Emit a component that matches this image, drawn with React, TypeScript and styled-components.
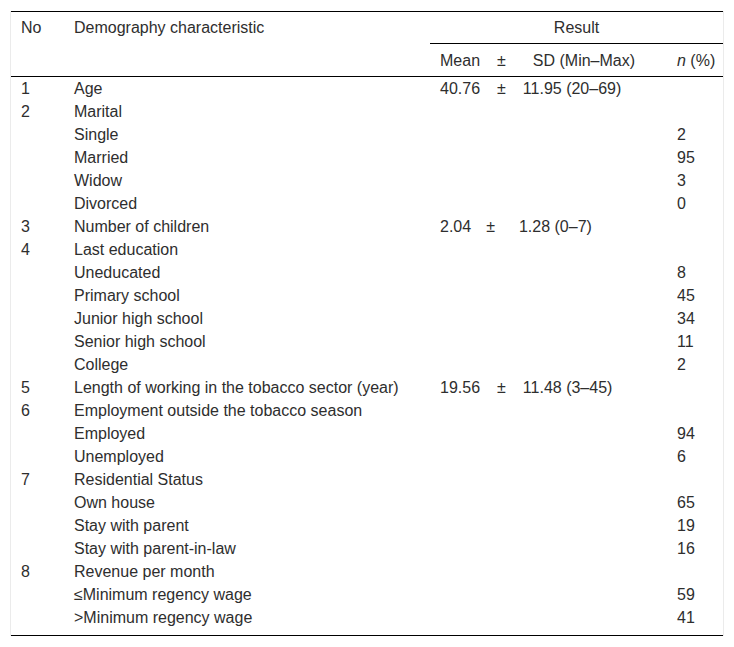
import React from "react";
import styled, { createGlobalStyle } from "styled-components";

const Global = createGlobalStyle`
  html, body { margin: 0; padding: 0; background: #fff; }
  body { font-family: "Liberation Sans", Arial, sans-serif; color: #2e2e2e; }
`;

const Wrapper = styled.div`
  margin: 11px 0 0 10px;
  width: 714px;
  border-left: 1px solid #ebebeb;
  border-right: 1px solid #ebebeb;
  box-sizing: border-box;
`;

const Table = styled.table`
  width: 712px;
  border-collapse: collapse;
  table-layout: fixed;
  font-family: "Liberation Sans", Arial, sans-serif;
  font-size: 16px;
  line-height: 19px;
  color: #2e2e2e;
  border-top: 1px solid #000;
  border-bottom: 1px solid #000;
`;

const HeadCell = styled.th<{ $center?: boolean; $rule?: boolean; $low?: boolean }>`
  font-weight: normal;
  text-align: ${(p) => (p.$center ? "center" : "left")};
  vertical-align: top;
  padding: ${(p) => (p.$low ? "7px 10px 6px" : "6px 10px 6px")};
  white-space: nowrap;
  border-bottom: ${(p) => (p.$rule ? "1px solid #000" : "none")};
`;

const LastHeadRow = styled.tr`
  border-bottom: 1px solid #000;
`;

const Cell = styled.td<{ $last?: boolean }>`
  padding: 2px 10px ${(p) => (p.$last ? "8px" : "2px")} 10px;
  vertical-align: top;
  white-space: nowrap;
`;

const Stat = styled.div<{ $g1: number; $g2: number }>`
  display: flex;
  align-items: baseline;
  & > span:nth-child(2) {
    margin: 0 ${(p) => p.$g2}px 0 ${(p) => p.$g1}px;
  }
`;

const Italic = styled.i`
  font-style: italic;
`;

type Row = {
  no?: string;
  label: string;
  stat?: [string, string, number, number];
  n?: string;
};

const rows: Row[] = [
  { no: "1", label: "Age", stat: ["40.76", "11.95 (20–69)", 17, 17] },
  { no: "2", label: "Marital" },
  { label: "Single", n: "2" },
  { label: "Married", n: "95" },
  { label: "Widow", n: "3" },
  { label: "Divorced", n: "0" },
  { no: "3", label: "Number of children", stat: ["2.04", "1.28 (0–7)", 15, 24] },
  { no: "4", label: "Last education" },
  { label: "Uneducated", n: "8" },
  { label: "Primary school", n: "45" },
  { label: "Junior high school", n: "34" },
  { label: "Senior high school", n: "11" },
  { label: "College", n: "2" },
  { no: "5", label: "Length of working in the tobacco sector (year)", stat: ["19.56", "11.48 (3–45)", 17, 17] },
  { no: "6", label: "Employment outside the tobacco season" },
  { label: "Employed", n: "94" },
  { label: "Unemployed", n: "6" },
  { no: "7", label: "Residential Status" },
  { label: "Own house", n: "65" },
  { label: "Stay with parent", n: "19" },
  { label: "Stay with parent-in-law", n: "16" },
  { no: "8", label: "Revenue per month" },
  { label: "≤Minimum regency wage", n: "59" },
  { label: ">Minimum regency wage", n: "41" },
];

export default function App() {
  return (
    <>
      <Global />
      <Wrapper>
        <Table>
          <colgroup>
            <col style={{ width: 53 }} />
            <col style={{ width: 366 }} />
            <col style={{ width: 237 }} />
            <col style={{ width: 56 }} />
          </colgroup>
          <thead>
            <tr>
              <HeadCell rowSpan={2}>No</HeadCell>
              <HeadCell rowSpan={2}>Demography characteristic</HeadCell>
              <HeadCell colSpan={2} $center $rule>
                Result
              </HeadCell>
            </tr>
            <LastHeadRow>
              <HeadCell $low>
                <Stat $g1={17} $g2={27}>
                  <span>Mean</span>
                  <span>±</span>
                  <span>SD (Min–Max)</span>
                </Stat>
              </HeadCell>
              <HeadCell $low>
                <Italic>n</Italic> (%)
              </HeadCell>
            </LastHeadRow>
          </thead>
          <tbody>
            {rows.map((r, i) => {
              const last = i === rows.length - 1;
              return (
                <tr key={i}>
                  <Cell $last={last}>{r.no ?? ""}</Cell>
                  <Cell $last={last}>{r.label}</Cell>
                  <Cell $last={last}>
                    {r.stat ? (
                      <Stat $g1={r.stat[2]} $g2={r.stat[3]}>
                        <span>{r.stat[0]}</span>
                        <span>±</span>
                        <span>{r.stat[1]}</span>
                      </Stat>
                    ) : null}
                  </Cell>
                  <Cell $last={last}>{r.n ?? ""}</Cell>
                </tr>
              );
            })}
          </tbody>
        </Table>
      </Wrapper>
    </>
  );
}
